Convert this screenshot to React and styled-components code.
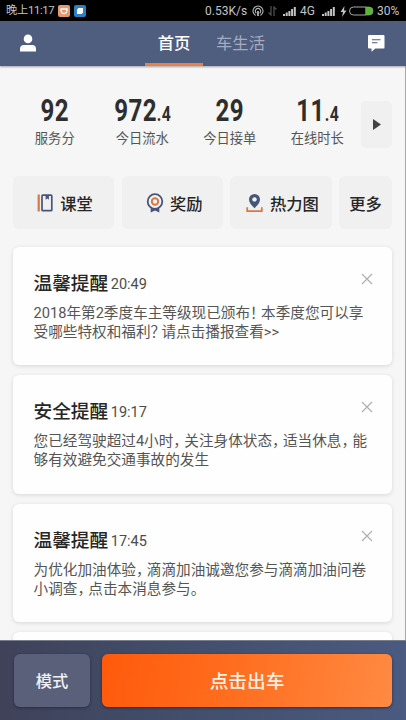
import React from 'react'
import styled, { createGlobalStyle } from 'styled-components'

const GlobalStyle = createGlobalStyle`
    * {
        box-sizing: border-box;
    }
    body {
        margin: 0;
        overflow: hidden;
        font-family: Roboto, "Noto Sans CJK SC", sans-serif;
        background: #f6f6f6;
    }
    button {
        border: none;
        padding: 0;
        font-family: inherit;
    }
`;

const Screen = styled.div`
    width: 406px;
    height: 720px;
    display: flex;
    flex-direction: column;
    background: #f6f6f6;
    overflow: hidden;
`;

const StatusBar = styled.div`
    height: 21px;
    flex: none;
    display: flex;
    align-items: center;
    padding: 1px 6px 0 6px;
    background: #000;
    color: #c4c4c4;
    font-size: 12px;
    line-height: 20px;
    white-space: nowrap;
    svg {
        display: block;
        flex: none;
    }
`;

const Clock = styled.span`
    width: 52px;
    flex: none;
    font-size: 11.3px;
    letter-spacing: -0.35px;
`;

const AppBadge = styled.span`
    width: 12px;
    height: 12px;
    margin-right: 4px;
    display: flex;
    align-items: center;
    justify-content: center;
    border-radius: 2px;
    background: ${(p) => p.$color};
`;

const StatusIcons = styled.div`
    margin-left: auto;
    display: flex;
    align-items: center;
`;

const StatusItem = styled.span`
    flex: none;
    display: block;
    width: ${(p) => p.$width}px;
    margin-left: ${(p) => p.$gap || 0}px;
`;

const NavBar = styled.div`
    height: 45px;
    flex: none;
    display: flex;
    justify-content: space-between;
    padding: 0 21px 0 19px;
    background: #4f5d7e;
    box-shadow: 0 1px 2px rgba(60, 60, 80, 0.45);
    z-index: 1;
    > svg {
        margin-top: 13px;
    }
`;

const Tabs = styled.div`
    display: flex;
    margin-left: 19px;
`;

const Tab = styled.div`
    width: ${(p) => p.$width}px;
    height: 45px;
    text-align: center;
    font-size: 16.3px;
    line-height: 45px;
    font-weight: ${(p) => (p.$active ? 500 : 400)};
    color: ${(p) => (p.$active ? '#fff' : '#a4abc0')};
    border-bottom: 3px solid ${(p) => (p.$active ? '#e78148' : 'transparent')};
`;

const Content = styled.div`
    flex: 1;
    min-height: 0;
    overflow: hidden;
    padding: 35px 13px 0 13px;
    border-right: 1px solid #a9a9a9;
`;

const Stats = styled.div`
    display: flex;
    height: 47px;
    margin-left: -2px;
`;

const Stat = styled.div`
    width: 87.5px;
    text-align: center;
`;

const StatValue = styled.div`
    height: 27px;
    margin-top: -5px;
    line-height: 29px;
    font-size: 30.5px;
    font-weight: 700;
    letter-spacing: 0.5px;
    color: #2e2e2e;
    transform: scaleX(0.79);
    white-space: nowrap;
    small {
        font-size: 20px;
    }
`;

const StatLabel = styled.div`
    margin-top: 6px;
    font-size: 13.3px;
    line-height: 20px;
    color: #555;
`;

const NextButton = styled.button`
    width: 31px;
    height: 47px;
    margin-left: auto;
    display: flex;
    align-items: center;
    justify-content: center;
    border-radius: 5px;
    background: #f0f0f0;
`;

const Shortcuts = styled.div`
    display: flex;
    gap: 7.5px;
    margin-top: 28px;
`;

const Shortcut = styled.button`
    width: ${(p) => p.$width || 101.3}px;
    height: 53px;
    display: flex;
    align-items: center;
    justify-content: center;
    gap: ${(p) => p.$gap || 7}px;
    padding: 0 0 0 ${(p) => p.$indent || 0}px;
    border-radius: 6px;
    background: #f0f0f0;
    color: #262626;
    font-size: 16.3px;
    font-weight: 500;
    white-space: nowrap;
`;

const Cards = styled.div`
    display: flex;
    flex-direction: column;
    gap: 10px;
    margin-top: 17.5px;
`;

const Card = styled.div`
    height: 118.5px;
    flex: none;
    padding: 25px 19px 0 20.5px;
    border-radius: 6px;
    background: #fefefe;
    box-shadow: 0 1px 4px rgba(0, 0, 0, 0.13);
`;

const CardHead = styled.div`
    display: flex;
    height: 24px;
    line-height: 24px;
    svg {
        margin: 1px 0 0 auto;
    }
`;

const CardTitle = styled.span`
    font-size: 18.7px;
    font-weight: 500;
    color: #262626;
`;

const CardTime = styled.span`
    margin: 1px 0 0 2.5px;
    font-size: 14.5px;
    color: #4c4c4c;
`;

const CardBody = styled.div`
    margin-top: 8px;
`;

const CardLine = styled.div`
    height: 19.3px;
    line-height: 19.3px;
    font-size: 14.63px;
    font-feature-settings: "halt";
    color: #555;
    white-space: nowrap;
`;

const Footer = styled.div`
    height: 80px;
    flex: none;
    display: flex;
    gap: 12px;
    padding: 12.5px 14px 0;
    background: linear-gradient(90deg, #3f4259 0%, #424e6b 45%, #4b5a80 100%);
    border-top: 1px solid #777d8c;
    z-index: 1;
`;

const ModeButton = styled.button`
    width: 76px;
    height: 53px;
    padding-bottom: 1px;
    border-radius: 6px;
    background: #5a6079;
    box-shadow: 0 1px 3px rgba(20, 20, 40, 0.5);
    color: #f1f1f5;
    font-size: 16.3px;
    font-weight: 500;
`;

const GoButton = styled.button`
    flex: 1;
    height: 53px;
    padding-bottom: 1px;
    border-radius: 6px;
    background: linear-gradient(100deg, #ff5a0c 0%, #ff6b1c 40%, #ff8a42 100%);
    box-shadow: 0 1px 3px rgba(20, 20, 40, 0.6);
    color: #fff0e0;
    font-size: 18.7px;
    font-weight: 500;
`;

const stats = [
    { value: '92', label: '服务分' },
    { value: '972', decimal: '.4', label: '今日流水' },
    { value: '29', label: '今日接单' },
    { value: '11', decimal: '.4', label: '在线时长' },
];

const messages = [
    {
        title: '温馨提醒',
        time: '20:49',
        lines: ['2018年第2季度车主等级现已颁布！ 本季度您可以享', '受哪些特权和福利？ 请点击播报查看>>'],
    },
    {
        title: '安全提醒',
        time: '19:17',
        lines: ['您已经驾驶超过4小时， 关注身体状态， 适当休息， 能', '够有效避免交通事故的发生'],
    },
    {
        title: '温馨提醒',
        time: '17:45',
        lines: ['为优化加油体验， 滴滴加油诚邀您参与滴滴加油问卷', '小调查， 点击本消息参与。'],
    },
];

const Signal = () => (
    <svg width="13" height="9" viewBox="0 0 13 9" fill="#c4c4c4">
        <rect x="0" y="7" width="2" height="2" />
        <rect x="2.7" y="5.5" width="2" height="3.5" />
        <rect x="5.4" y="4" width="2" height="5" />
        <rect x="8.1" y="2" width="2" height="7" />
        <rect x="10.8" y="0" width="2" height="9" />
    </svg>
)

const Hotspot = () => (
    <svg width="12" height="12" viewBox="0 0 12 12" fill="none" stroke="#b5b5b5" strokeWidth="1.1">
        <path d="M3.6 10.4a5 5 0 1 1 4.8 0" />
        <path d="M4.3 8.2a2.7 2.7 0 1 1 3.4 0" />
        <path d="M6 6v5" strokeWidth="1.8" />
    </svg>
)

const DataArrows = () => (
    <svg width="9" height="10" viewBox="0 0 9 10" fill="none" stroke="#4d4d4d" strokeWidth="1.3">
        <path d="M3 0v9L0.6 6.5M6 10V1l2.4 2.5" />
    </svg>
)

const Bolt = () => (
    <svg width="7" height="11" viewBox="0 0 7 11" fill="#c4c4c4">
        <path d="M4.5 0L0.5 6h2.5L2 11l4.5-6.5H4z" />
    </svg>
)

const Battery = () => (
    <svg width="25" height="10" viewBox="0 0 25 10">
        <path d="M17 1H4.500a4 4 0 0 0 0 8H17z" fill="none" stroke="#aaa" />
        <path d="M16.500 1H20a4 4 0 0 1 0 8h-3.500z" fill="#55b82e" />
        <path d="M17 1h3a4 4 0 0 1 0 8h-3" fill="none" stroke="#8fa886" strokeWidth="0.7" />
    </svg>
)

const UserIcon = () => (
    <svg width="18" height="18" viewBox="0 0 18 18" fill="#fff">
        <circle cx="9" cy="4.9" r="4.3" />
        <path d="M1 17.500v-2.500Q1 11 5 11h8q4 0 4 4v2.500z" />
    </svg>
)

const MessageIcon = () => (
    <svg width="18" height="18" viewBox="0 0 18 18">
        <path d="M2 1h14.500q1 0 1 1v11.500q0 1-1 1H8.300L4.500 17.700V14.500H2q-1 0-1-1V2q0-1 1-1z" fill="#fff" />
        <path d="M5 5.800h8.500M5 8.800h5.500" stroke="#4f5d7e" strokeWidth="1.1" />
    </svg>
)

const BookIcon = () => (
    <svg width="16" height="18" viewBox="0 0 16 18" fill="none">
        <path d="M1.700 0.500v17" stroke="#d9783f" strokeWidth="2.200" />
        <rect x="5" y="1.200" width="9.800" height="15.500" rx="0.800" stroke="#47557a" strokeWidth="1.700" />
        <path d="M8.600 1.500h3.300v4.200l-1.650-1.300-1.650 1.300z" fill="#47557a" />
    </svg>
)

const MedalIcon = () => (
    <svg width="18" height="20" viewBox="0 0 18 20" fill="none">
        <path d="M4.700 13v6.500L9 17.600l4.300 1.900V13z" fill="#47557a" />
        <circle cx="9" cy="8.500" r="7.300" fill="#f4f4f4" stroke="#47557a" strokeWidth="1.800" />
        <circle cx="9" cy="8.500" r="3.200" stroke="#d9783f" strokeWidth="2" />
    </svg>
)

const HeatIcon = () => (
    <svg width="17" height="20" viewBox="0 0 17 20" fill="none">
        <path d="M8.500 15.300C5.500 12.300 3 9.500 3 6.500a5.500 5.500 0 1 1 11 0c0 3-2.500 5.800-5.500 8.800z" fill="#47557a" />
        <circle cx="8.500" cy="6.400" r="2.200" fill="#f4f4f4" />
        <path d="M1.200 14.300v3.800h14.600v-3.800" stroke="#d9783f" strokeWidth="1.800" />
    </svg>
)

const CloseIcon = () => (
    <svg width="12" height="12" viewBox="0 0 12 12" stroke="#b0b0b0" strokeWidth="1.200">
        <path d="M1 1l10 10M11 1L1 11" />
    </svg>
)

const App = () => {
    return (
        <Screen>
            <GlobalStyle />
            <StatusBar>
                <Clock>晚上11:17</Clock>
                <AppBadge $color="#e49a6b">
                    <svg width="8" height="7" viewBox="0 0 8 7" fill="none" stroke="#fff" strokeWidth="1.300">
                        <path d="M1 1h6v1.500Q6.500 5.500 4 5.700 1.500 5.500 1 2.500z" />
                    </svg>
                </AppBadge>
                <AppBadge $color="#2f7fc4">
                    <svg width="6" height="6" viewBox="0 0 6 6" fill="#fff">
                        <path d="M1.500 0H6v4.500L4.500 6H0V1.500z" />
                    </svg>
                </AppBadge>
                <StatusIcons>
                    <StatusItem $width={42}>0.53K/s</StatusItem>
                    <StatusItem $width={12} $gap={5}><Hotspot /></StatusItem>
                    <StatusItem $width={9} $gap={4}><DataArrows /></StatusItem>
                    <StatusItem $width={13} $gap={6}><Signal /></StatusItem>
                    <StatusItem $width={16} $gap={4}>4G</StatusItem>
                    <StatusItem $width={13} $gap={6}><Signal /></StatusItem>
                    <StatusItem $width={7} $gap={5}><Bolt /></StatusItem>
                    <StatusItem $width={25} $gap={2}><Battery /></StatusItem>
                    <StatusItem $width={23} $gap={3}>30%</StatusItem>
                </StatusIcons>
            </StatusBar>
            <NavBar>
                <UserIcon />
                <Tabs>
                    <Tab $active $width={58}>首页</Tab>
                    <Tab $width={75}>车生活</Tab>
                </Tabs>
                <MessageIcon />
            </NavBar>
            <Content>
                <Stats>
                    {stats.map((stat) => (
                        <Stat key={stat.label}>
                            <StatValue>
                                {stat.value}
                                {stat.decimal && <small>{stat.decimal}</small>}
                            </StatValue>
                            <StatLabel>{stat.label}</StatLabel>
                        </Stat>
                    ))}
                    <NextButton>
                        <svg width="8" height="11" viewBox="0 0 8 11" fill="#444">
                            <path d="M0 0l8 5.500L0 11z" />
                        </svg>
                    </NextButton>
                </Stats>
                <Shortcuts>
                    <Shortcut $indent={3}><BookIcon />课堂</Shortcut>
                    <Shortcut $indent={4} $gap={6}><MedalIcon />奖励</Shortcut>
                    <Shortcut $indent={3}><HeatIcon />热力图</Shortcut>
                    <Shortcut $width={53}>更多</Shortcut>
                </Shortcuts>
                <Cards>
                    {messages.map((message) => (
                        <Card key={message.time}>
                            <CardHead>
                                <CardTitle>{message.title}</CardTitle>
                                <CardTime>{message.time}</CardTime>
                                <CloseIcon />
                            </CardHead>
                            <CardBody>
                                {message.lines.map((line) => (
                                    <CardLine key={line}>{line}</CardLine>
                                ))}
                            </CardBody>
                        </Card>
                    ))}
                    <Card />
                </Cards>
            </Content>
            <Footer>
                <ModeButton>模式</ModeButton>
                <GoButton>点击出车</GoButton>
            </Footer>
        </Screen>
    )
}

export default App
